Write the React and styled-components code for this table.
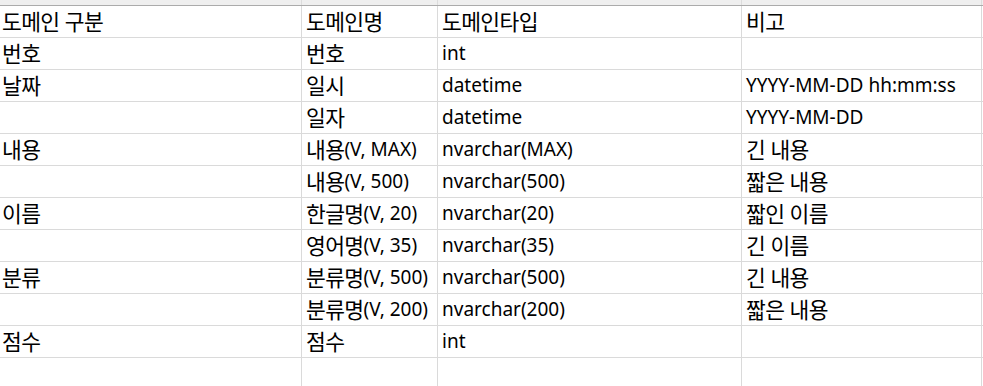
import React from "react";
import styled, { createGlobalStyle } from "styled-components";

const Global = createGlobalStyle`
  html, body { margin: 0; padding: 0; background: #fff; }
  body { overflow: hidden; }
`;

const COLS = "302px 136px 304px 240px 1fr";

const Sheet = styled.div`
  width: 983px;
  height: 386px;
  overflow: hidden;
  font-family: "Noto Sans", "Noto Sans CJK KR", sans-serif;
  font-size: 19px;
  color: #000;
`;

const Strip = styled.div`
  display: grid;
  grid-template-columns: ${COLS};
  height: 6px;
  box-sizing: border-box;
  background: #efefef;
  border-bottom: 1px solid #ababab;
`;

const StripCell = styled.div`
  box-sizing: border-box;
  border-right: 1px solid #dcdcdc;
  &:last-child { border-right: none; }
`;

const Row = styled.div`
  display: grid;
  grid-template-columns: ${COLS};
  grid-template-rows: ${(p) => (p.$tail ? "40px" : "32px")};
`;

const Cell = styled.div`
  box-sizing: border-box;
  height: 100%;
  border-right: 1px solid #dadada;
  border-bottom: ${(p) => (p.$tail ? "none" : "1px solid #dadada")};
  padding-left: ${(p) => (p.$first ? "2px" : "4px")};
  line-height: 31px;
  white-space: nowrap;
  overflow: visible;
  &:last-child { border-right: none; }
`;

const Ko = styled.span`
  font-family: "Noto Sans CJK KR", sans-serif;
  font-size: 21.5px;
  line-height: 1;
  letter-spacing: -0.6px;
  word-spacing: 1px;
  vertical-align: -1.5px;
`;

const HANGUL = /([\uAC00-\uD7A3]+(?: [\uAC00-\uD7A3]+)*)/;

function Text({ value }) {
  return value
    .split(HANGUL)
    .filter((s) => s !== "")
    .map((s, i) => (HANGUL.test(s) ? <Ko key={i}>{s}</Ko> : <span key={i}>{s}</span>));
}

const rows = [
  ["도메인 구분", "도메인명", "도메인타입", "비고"],
  ["번호", "번호", "int", ""],
  ["날짜", "일시", "datetime", "YYYY-MM-DD hh:mm:ss"],
  ["", "일자", "datetime", "YYYY-MM-DD"],
  ["내용", "내용(V, MAX)", "nvarchar(MAX)", "긴 내용"],
  ["", "내용(V, 500)", "nvarchar(500)", "짧은 내용"],
  ["이름", "한글명(V, 20)", "nvarchar(20)", "짧인 이름"],
  ["", "영어명(V, 35)", "nvarchar(35)", "긴 이름"],
  ["분류", "분류명(V, 500)", "nvarchar(500)", "긴 내용"],
  ["", "분류명(V, 200)", "nvarchar(200)", "짧은 내용"],
  ["점수", "점수", "int", ""],
];

export default function App() {
  return (
    <>
      <Global />
      <Sheet>
        <Strip>
          {[0, 1, 2, 3, 4].map((i) => (
            <StripCell key={i} />
          ))}
        </Strip>
        {rows.map((r, ri) => (
          <Row key={ri}>
            {r.map((t, ci) => (
              <Cell key={ci} $first={ci === 0}>
                <Text value={t} />
              </Cell>
            ))}
            <Cell />
          </Row>
        ))}
        <Row $tail>
          {[0, 1, 2, 3, 4].map((i) => (
            <Cell key={i} $tail />
          ))}
        </Row>
      </Sheet>
    </>
  );
}
